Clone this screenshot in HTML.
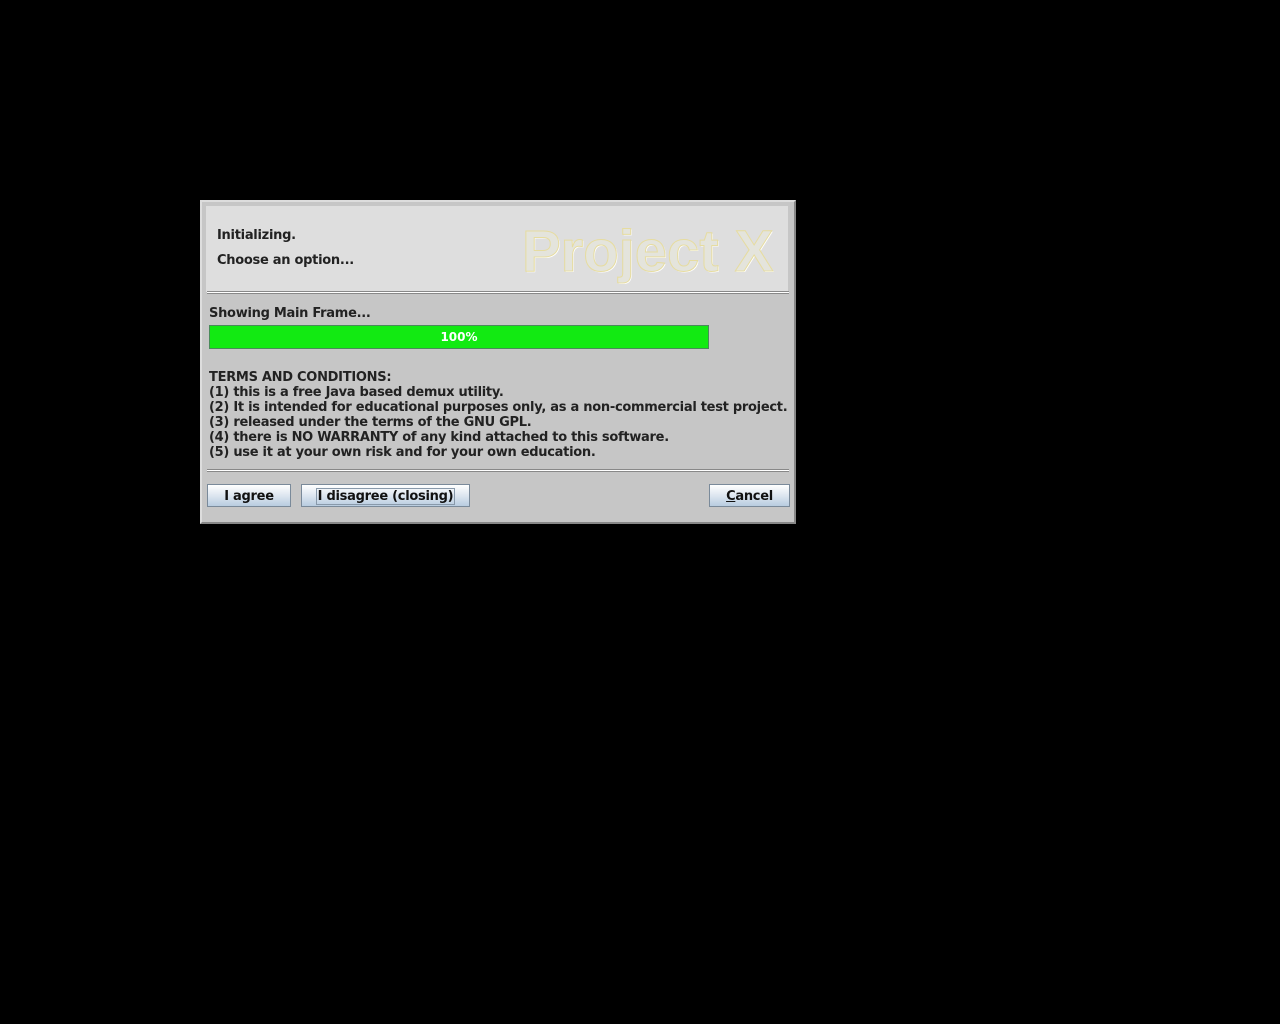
<!DOCTYPE html>
<html><head><style>
body{margin:0;width:1280px;height:1024px;background:#000;position:relative;overflow:hidden;font-family:"DejaVu Sans",sans-serif;}
.dlg{position:absolute;left:200px;top:200px;width:592px;height:320px;background:#c6c6c6;border:2px solid #ddd;border-right-color:#888;border-bottom-color:#888;}
.top{position:absolute;left:4px;top:4px;width:582px;height:86px;background:#dedede;}
.t{position:absolute;font-size:13px;color:#222;white-space:nowrap;font-weight:bold;letter-spacing:-0.28px;}
.sep{position:absolute;left:5px;width:582px;height:1px;background:#fff;border-top:1px solid #888;border-bottom:1px solid #888;}
.bar{position:absolute;left:7px;top:123px;width:498px;height:22px;background:#12ea12;border:1px solid #4a8a5a;}
.btn{position:absolute;top:282px;height:23px;border:1px solid #7a8a9a;background:linear-gradient(#fff,#dde6f0 50%,#b8cce0);font-size:13px;font-weight:bold;letter-spacing:-0.28px;text-align:center;line-height:23px;color:#111;box-sizing:border-box;}
.logo{position:absolute;left:316px;top:12px;font-family:"Liberation Sans",sans-serif;font-weight:bold;font-size:58px;color:#e4e4dc;-webkit-text-stroke:1px #e6dca0;text-shadow:1px 1px 0 #fff;}
</style></head><body>
<div class="dlg">
<div class="top">
<div class="t" style="left:11px;top:22px">Initializing.</div>
<div class="t" style="left:11px;top:47px">Choose an option...</div>
<div class="logo">Project X</div>
</div>
<div class="sep" style="top:89px"></div>
<div class="t" style="left:7px;top:104px">Showing Main Frame...</div>
<div class="bar"><div style="text-align:center;color:#fff;font-size:12px;line-height:22px;font-weight:bold">100%</div></div>
<div class="t" style="left:7px;top:168px;line-height:15px">TERMS AND CONDITIONS:<br>(1) this is a free Java based demux utility.<br>(2) It is intended for educational purposes only, as a non-commercial test project.<br>(3) released under the terms of the GNU GPL.<br>(4) there is NO WARRANTY of any kind attached to this software.<br>(5) use it at your own risk and for your own education.</div>
<div class="sep" style="top:267px"></div>
<div class="btn" style="left:5px;width:84px">I agree</div>
<div class="btn" style="left:99px;width:169px"><span style="border:1px solid #8899aa;padding:0 1px">I disagree (closing)</span></div>
<div class="btn" style="left:507px;width:81px"><u>C</u>ancel</div>
</div>
</body></html>
